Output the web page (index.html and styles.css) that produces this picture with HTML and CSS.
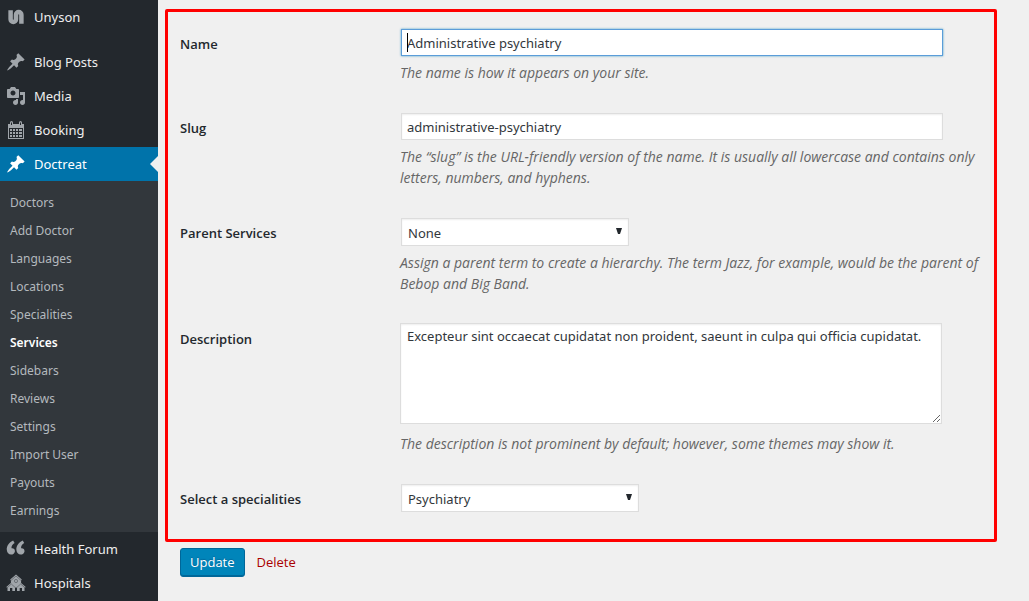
FILE: index.html
```html
<!DOCTYPE html>
<html lang="en">
<head>
<meta charset="utf-8">
<title>Edit Service</title>
<link rel="stylesheet" href="styles.css">
</head>
<body>
<div class="layout">
  <nav class="sidebar" aria-label="Main menu">
    <ul class="menu">
      <li class="menu-first"><a class="menu-link" href="#"><svg class="icon" viewBox="0 0 20 20"><path class="icon-stroke" d="M4.600 3.200V12.300a2.700 2.600 0 0 0 5.400 0V7.700a2.700 2.600 0 0 1 5.400 0V16.800"/></svg><span>Unyson</span></a></li>
      <li><a class="menu-link" href="#"><svg class="icon" viewBox="0 0 20 20"><path d="M10.440 3.020l1.820-1.820 6.360 6.350-1.830 1.820c-1.050-.68-2.480-.57-3.410.36l-.75.75c-.92.93-1.040 2.350-.35 3.410l-1.830 1.820-2.410-2.410-2.800 2.790c-.42.42-3.380 2.710-3.800 2.290s1.860-3.390 2.280-3.810l2.790-2.790L4.100 9.360l1.830-1.820c1.050.69 2.480.57 3.400-.36l.75-.75c.93-.92 1.050-2.350.36-3.410z"/></svg><span>Blog Posts</span></a></li>
      <li><a class="menu-link" href="#"><svg class="icon" viewBox="0 0 20 20"><path d="M13 11V4c0-.55-.45-1-1-1h-1.670L9 1H5L3.670 3H2c-.55 0-1 .45-1 1v7c0 .55.45 1 1 1h10c.55 0 1-.45 1-1zM7 4.500c1.380 0 2.500 1.120 2.500 2.500S8.380 9.500 7 9.500 4.500 8.380 4.500 7 5.620 4.500 7 4.500zM14 6h5v10.500c0 1.380-1.120 2.500-2.500 2.500S14 17.880 14 16.500s1.120-2.500 2.500-2.500c.17 0 .34.02.5.05V9h-3V6zm-4 8.050V13h2v3.500c0 1.380-1.120 2.500-2.500 2.500S7 17.880 7 16.500 8.120 14 9.500 14c.17 0 .34.02.5.05z"/></svg><span>Media</span></a></li>
      <li><a class="menu-link" href="#"><svg class="icon" viewBox="0 0 20 20"><path fill-rule="evenodd" d="M2 4h2V2.500Q4 1 5.500 1T7 2.500V4h6V2.500Q13 1 14.500 1T16 2.500V4h2v15H2ZM3 8v10h14V8ZM5 2.500V5h1V2.500ZM14 2.500V5h1V2.500Z"/><path d="M7 9h2v2H7zM10 9h2v2h-2zM13 9h3v2h-3zM4 12h2v2H4zM7 12h2v2H7zM10 12h2v2h-2zM13 12h3v2h-3zM4 15h2v2H4zM7 15h2v2H7zM10 15h2v2h-2zM13 15h3v2h-3zM4 9h2v2H4z"/></svg><span>Booking</span></a></li>
      <li><a class="menu-link menu-link-current" href="#"><svg class="icon" viewBox="0 0 20 20"><path d="M10.440 3.020l1.820-1.820 6.360 6.350-1.830 1.820c-1.050-.68-2.480-.57-3.410.36l-.75.75c-.92.93-1.040 2.350-.35 3.410l-1.830 1.820-2.410-2.410-2.800 2.790c-.42.42-3.380 2.710-3.800 2.290s1.860-3.390 2.280-3.810l2.790-2.790L4.100 9.360l1.830-1.820c1.050.69 2.480.57 3.400-.36l.75-.75c.93-.92 1.050-2.350.36-3.410z"/></svg><span>Doctreat</span></a>
        <ul class="submenu">
          <li><a href="#">Doctors</a></li>
          <li><a href="#">Add Doctor</a></li>
          <li><a href="#">Languages</a></li>
          <li><a href="#">Locations</a></li>
          <li><a href="#">Specialities</a></li>
          <li><a class="submenu-current" href="#" aria-current="page">Services</a></li>
          <li><a href="#">Sidebars</a></li>
          <li><a href="#">Reviews</a></li>
          <li><a href="#">Settings</a></li>
          <li><a href="#">Import User</a></li>
          <li><a href="#">Payouts</a></li>
          <li><a href="#">Earnings</a></li>
        </ul>
      </li>
      <li><a class="menu-link" href="#"><svg class="icon" viewBox="0 0 20 20"><path d="M8.900 12.300c0-.9-.2-1.600-.7-2.200-.7-.8-1.900-1-2.700-.8C5.200 7.500 6.600 5 8.600 4L7.100 1.400C3.700 3 .3 6.600.8 11c.3 2.800 2 4.600 4.200 4.600 1 0 1.900-.3 2.600-.9s1.300-1.400 1.300-2.400zM18.500 12.300c0-.9-.2-1.600-.7-2.200-.7-.8-1.900-1-2.700-.8-.3-1.800 1.100-4.300 3.100-5.300L16.700 1.400c-3.400 1.600-6.800 5.200-6.300 9.600.3 2.800 2 4.600 4.200 4.600 1 0 1.900-.3 2.600-.9s1.300-1.400 1.300-2.400z"/></svg><span>Health Forum</span></a></li>
      <li><a class="menu-link" href="#"><svg class="icon" viewBox="0 0 20 20"><path fill-rule="evenodd" d="M10 1.500L4.200 6.600l.7.800V10L.3 14l.7.800.5-.4V18h7.500v-3.600l1 .8 1-.8V18h7.500v-3.600l.5.400.7-.8-4.600-4V7.400l.7-.8ZM4 15H6.300v3H4ZM13.700 15h2.300v3h-2.300Z"/><path class="icon-lines" d="M4.800 7.600L10 3L15.200 7.600M.8 15L5.300 11L10 15.200L14.700 11L19.200 15"/><circle class="icon-lines" cx="10" cy="8" r="1.600"/></svg><span>Hospitals</span></a></li>
    </ul>
  </nav>

  <main class="content">
    <form class="edit-form">
      <div class="fields">
        <div class="row">
          <label class="label" for="name">Name</label>
          <div class="field">
            <div class="input-wrap"><input class="text-input text-input-active" id="name" type="text" value="Administrative psychiatry"><span class="caret"></span></div>
            <p class="help">The name is how it appears on your site.</p>
          </div>
        </div>
        <div class="row">
          <label class="label" for="slug">Slug</label>
          <div class="field">
            <div class="input-wrap"><input class="text-input" id="slug" type="text" value="administrative-psychiatry"></div>
            <p class="help">The “slug” is the URL-friendly version of the name. It is usually all lowercase and contains only letters, numbers, and hyphens.</p>
          </div>
        </div>
        <div class="row">
          <label class="label" for="parent">Parent Services</label>
          <div class="field">
            <div class="select-wrap select-parent"><select class="select" id="parent"><option>None</option></select><svg class="arrow" viewBox="0 0 6 7"><path d="M0 0h6L4 6h-2z"/></svg></div>
            <p class="help">Assign a parent term to create a hierarchy. The term Jazz, for example, would be the parent of Bebop and Big Band.</p>
          </div>
        </div>
        <div class="row">
          <label class="label" for="description">Description</label>
          <div class="field">
            <textarea class="textarea" id="description">Excepteur sint occaecat cupidatat non proident, saeunt in culpa qui officia cupidatat.</textarea>
            <p class="help help-textarea">The description is not prominent by default; however, some themes may show it.</p>
          </div>
        </div>
        <div class="row">
          <label class="label" for="speciality">Select a specialities</label>
          <div class="field">
            <div class="select-wrap select-speciality"><select class="select" id="speciality"><option>Psychiatry</option></select><svg class="arrow" viewBox="0 0 6 7"><path d="M0 0h6L4 6h-2z"/></svg></div>
          </div>
        </div>
      </div>
      <div class="actions">
        <button class="update" type="submit">Update</button>
        <a class="delete" href="#">Delete</a>
      </div>
    </form>
  </main>
</div>
</body>
</html>
```

FILE: styles.css
```css
* { box-sizing: border-box; }

body {
  margin: 0;
  background: #f0f0f0;
  color: #32373c;
  font: 13px/21px "Open Sans", "Noto Sans", sans-serif;
}

a { text-decoration: none; }

.layout { display: flex; min-height: 100vh; }

.sidebar { flex: 0 0 158px; background: #23282d; }

.menu, .submenu { margin: 0; padding: 0; list-style: none; }

.menu-first { margin-bottom: 11px; }

.menu-link {
  position: relative;
  display: flex;
  align-items: center;
  gap: 8px;
  height: 34px;
  padding-left: 6px;
  color: #eee;
  font-family: "Noto Sans", sans-serif;
}

.menu-link-current { background: #0073aa; color: #fff; }

.menu-link-current::after {
  content: "";
  position: absolute;
  right: 0;
  border: 8px solid transparent;
  border-left-width: 0;
  border-right-color: #f0f0f0;
}

.icon { width: 20px; height: 20px; fill: #a0a5aa; }
.menu-link-current .icon { fill: #fff; }
.icon-lines { fill: none; stroke: #23282d; stroke-width: 0.4; }
.icon-stroke { fill: none; stroke: #a0a5aa; stroke-width: 4.500; }

.submenu {
  padding: 8px 0 7px;
  background: #32373c;
  font-family: "Noto Sans", sans-serif;
  font-size: 12px;
}

.submenu a {
  display: block;
  padding: 0 10px;
  line-height: 28px;
  color: #b4b9be;
}

.submenu .submenu-current { color: #fff; font-weight: 600; }

.content { flex: 1; padding: 9px 32px 24px 7px; }

.fields {
  display: flex;
  flex-direction: column;
  gap: 29px;
  padding: 16px 12px 26px;
  border: 3px solid #f00;
  border-radius: 2px;
}

.row { display: grid; grid-template-columns: 220px 1fr; align-items: start; }

.label { padding-top: 6px; color: #23282d; font-weight: 600; }

.input-wrap {
  position: relative;
  width: calc(100% - 39px);
  padding: 1px 0 1px 1px;
}

.text-input, .select, .textarea {
  display: block;
  width: 100%;
  margin: 0;
  border: 1px solid #ddd;
  border-radius: 0;
  outline: 0;
  background: #fff;
  box-shadow: inset 0 1px 2px rgba(0, 0, 0, 0.07);
  color: #32373c;
  font: 13px/21px "Noto Sans", sans-serif;
}

.text-input { height: 27px; padding: 2px 5px; }

.text-input-active { border-color: #5b9dd9; box-shadow: 0 0 2px rgba(30, 140, 190, 0.8); }

.caret {
  position: absolute;
  top: 5px;
  left: 7px;
  width: 1px;
  height: 19px;
  background: #000;
}

.select-wrap { position: relative; padding: 1px 0 1px 1px; }
.select-parent { width: 229px; }
.select-speciality { width: 239px; }

.select { height: 28px; padding: 4px 6px 2px; appearance: none; }

.arrow {
  position: absolute;
  top: 11px;
  right: 7px;
  width: 6px;
  height: 7px;
  fill: #23282d;
  pointer-events: none;
}

.textarea { width: calc(100% - 40px); height: 101px; padding: 2px 6px; resize: vertical; }

.help {
  margin: 5px 0 0;
  color: #666;
  font-size: 14px;
  font-style: italic;
}
.help-textarea { margin-top: 9px; }

.actions { display: flex; align-items: flex-start; gap: 12px; padding: 6px 15px 0; }

.update {
  height: 29px;
  padding: 0 9px;
  border: 1px solid #006799;
  border-radius: 3px;
  background: #0085ba;
  box-shadow: inset 0 -1px 0 #006799;
  color: #fff;
  font: inherit;
  text-shadow: 0 -1px 1px #006799;
}

.delete { line-height: 29px; color: #a00; }
```
